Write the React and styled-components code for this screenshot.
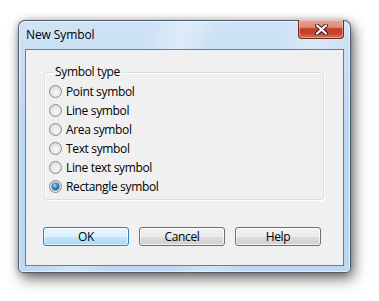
import React from "react";
import styled, { createGlobalStyle } from "styled-components";

const Global = createGlobalStyle`
  html, body { margin: 0; padding: 0; background: #ffffff; }
  body { font-family: "Open Sans", "Noto Sans", "Liberation Sans", sans-serif; font-size: 12px; color: #000; }
`;

const Stage = styled.div`
  width: 379px;
  height: 301px;
  padding: 20px 0 0 18px;
  box-sizing: border-box;
`;

const Window = styled.div`
  width: 333px;
  height: 253px;
  box-sizing: border-box;
  border: 1px solid rgba(40, 50, 60, 0.75);
  border-radius: 7px 7px 5px 5px;
  background:
    linear-gradient(115deg, rgba(255,255,255,0) 30%, rgba(255,255,255,0.35) 38%, rgba(255,255,255,0) 46%, rgba(255,255,255,0) 60%, rgba(255,255,255,0.3) 68%, rgba(255,255,255,0) 76%),
    linear-gradient(180deg, #cfe3f6 0%, #bed8f1 40%, #bcd8f2 100%);
  box-shadow: 3px 6px 14px rgba(0,0,0,0.55), 0 0 6px rgba(0,0,0,0.25), inset 0 0 0 1px rgba(255,255,255,0.55);
  display: flex;
  flex-direction: column;
`;

const TitleBar = styled.div`
  height: 28px;
  display: flex;
  align-items: flex-start;
  justify-content: space-between;
  padding: 0 6px 0 7px;
`;

const Title = styled.div`
  font-size: 12px;
  line-height: 16px;
  margin-top: 6px;
  color: #000;
  letter-spacing: -0.1px;
`;

const CloseButton = styled.div`
  width: 46px;
  height: 19px;
  margin-top: -1px;
  box-sizing: border-box;
  border: 1px solid #6b2a22;
  border-top: none;
  border-radius: 0 0 4px 4px;
  background: linear-gradient(180deg, #e9a797 0%, #dc8a76 40%, #c33d26 50%, #c6452e 75%, #d8735c 100%);
  box-shadow: inset 0 0 0 1px rgba(255, 220, 210, 0.45);
  display: flex;
  align-items: center;
  justify-content: center;
`;

const Client = styled.div`
  flex: 1;
  margin: 0 6px 6px 6px;
  border: 1px solid #6f7c8a;
  background: #f0f0f0;
  display: flex;
  flex-direction: column;
  padding: 15px 19px 0 18px;
  letter-spacing: -0.35px;
`;

const Group = styled.fieldset`
  margin: 0;
  padding: 3px 0 0 4px;
  height: 135px;
  box-sizing: border-box;
  border: 1px solid #d5dfe5;
  border-radius: 3px;
  box-shadow: inset 1px 1px 0 #ffffff, 1px 1px 0 #ffffff;
  display: flex;
  flex-direction: column;
`;

const Legend = styled.legend`
  padding: 0 1px;
  margin-left: 5px;
  font-size: 12px;
  line-height: 14px;
  color: #000;
`;

const Option = styled.label`
  display: flex;
  align-items: center;
  height: 19px;
  gap: 4px;
  font-size: 12px;
`;

const RadioDot = styled.span`
  width: 13px;
  height: 13px;
  box-sizing: border-box;
  border-radius: 50%;
  border: 1px solid #8a8c8e;
  background: radial-gradient(circle at 55% 60%, #f8f8f8 0%, #e8e8e8 45%, #cfd0d1 100%);
  display: flex;
  align-items: center;
  justify-content: center;
  flex: none;
  &::after {
    content: "";
    width: 7px;
    height: 7px;
    border-radius: 50%;
    display: ${(p) => (p.$checked ? "block" : "none")};
    background: radial-gradient(circle at 40% 35%, #a6e0fb 0%, #2f8fd2 40%, #0b3f70 100%);
    box-shadow: 0 0 0 0.5px #1d4c78;
  }
`;

const ButtonRow = styled.div`
  display: flex;
  gap: 10px;
  margin-top: 27px;
  margin-left: -1px;
`;

const Button = styled.div`
  width: 86px;
  height: 19px;
  box-sizing: border-box;
  border-radius: 3px;
  border: 1px solid ${(p) => (p.$default ? "#3c7fb1" : "#707070")};
  background: ${(p) =>
    p.$default
      ? "linear-gradient(180deg, #eaf6fd 0%, #d9f0fc 50%, #bee6fd 51%, #a7d9f5 100%)"
      : "linear-gradient(180deg, #f2f2f2 0%, #ebebeb 50%, #dddddd 51%, #cfcfcf 100%)"};
  box-shadow: inset 0 0 0 1px ${(p) => (p.$default ? "rgba(255,255,255,0.6)" : "rgba(255,255,255,0.7)")};
  display: flex;
  align-items: center;
  justify-content: center;
  font-size: 12px;
  line-height: 14px;
`;

const options = [
  "Point symbol",
  "Line symbol",
  "Area symbol",
  "Text symbol",
  "Line text symbol",
  "Rectangle symbol",
];

export default function App() {
  return (
    <Stage>
      <Global />
      <Window>
        <TitleBar>
          <Title>New Symbol</Title>
          <CloseButton>
            <svg width="13" height="11" viewBox="0 0 13 11">
              <path d="M2 1.5 L11 9.5 M11 1.5 L2 9.5" stroke="#3a1a14" strokeWidth="4" strokeLinecap="round" />
              <path d="M2 1.5 L11 9.5 M11 1.5 L2 9.5" stroke="#ffffff" strokeWidth="2.2" strokeLinecap="round" />
            </svg>
          </CloseButton>
        </TitleBar>
        <Client>
          <Group>
            <Legend>Symbol type</Legend>
            {options.map((o, i) => (
              <Option key={o}>
                <RadioDot $checked={i === options.length - 1} />
                {o}
              </Option>
            ))}
          </Group>
          <ButtonRow>
            <Button $default>OK</Button>
            <Button>Cancel</Button>
            <Button>Help</Button>
          </ButtonRow>
        </Client>
      </Window>
    </Stage>
  );
}
